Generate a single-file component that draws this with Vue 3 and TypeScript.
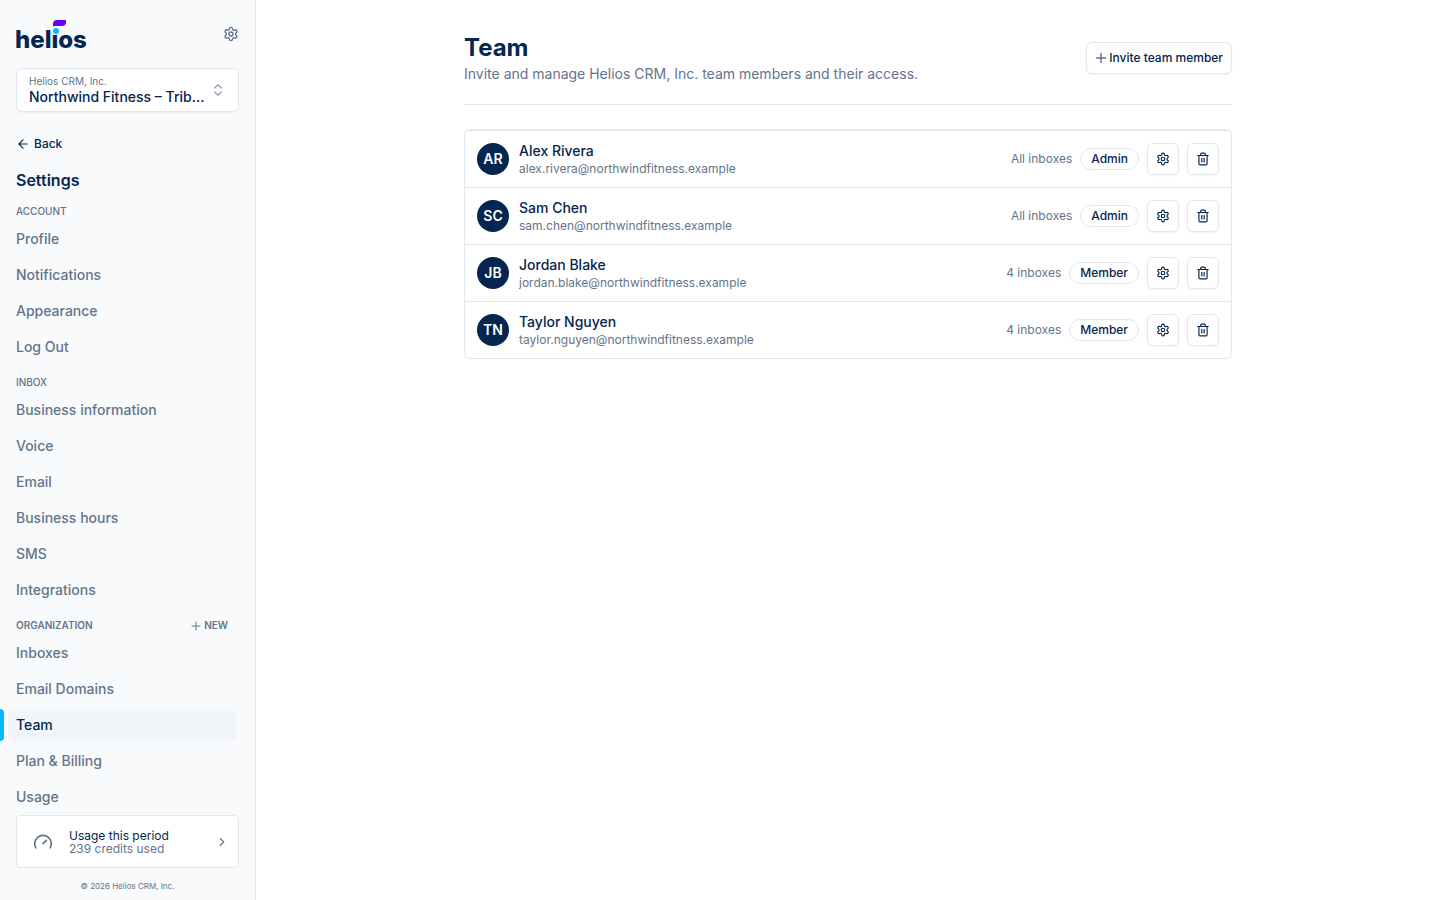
<script setup lang="ts">
interface NavItem { label: string; active?: boolean }
interface NavGroup { title: string; canAdd?: boolean; items: NavItem[] }
interface Member { initials: string; name: string; email: string; access: string; role: string }

const toItems = (labels: string[], active = ''): NavItem[] =>
  labels.map((label) => ({ label, active: label === active }))

const groups: NavGroup[] = [
  { title: 'Account', items: toItems(['Profile', 'Notifications', 'Appearance', 'Log Out']) },
  {
    title: 'Inbox',
    items: toItems(['Business information', 'Voice', 'Email', 'Business hours', 'SMS', 'Integrations']),
  },
  {
    title: 'Organization',
    canAdd: true,
    items: toItems(['Inboxes', 'Email Domains', 'Team', 'Plan & Billing', 'Usage'], 'Team'),
  },
]

const members: Member[] = [
  { initials: 'AR', name: 'Alex Rivera', email: 'alex.rivera@northwindfitness.example', access: 'All inboxes', role: 'Admin' },
  { initials: 'SC', name: 'Sam Chen', email: 'sam.chen@northwindfitness.example', access: 'All inboxes', role: 'Admin' },
  { initials: 'JB', name: 'Jordan Blake', email: 'jordan.blake@northwindfitness.example', access: '4 inboxes', role: 'Member' },
  { initials: 'TN', name: 'Taylor Nguyen', email: 'taylor.nguyen@northwindfitness.example', access: '4 inboxes', role: 'Member' },
]

const gearPath =
  'M12.22 2h-.44a2 2 0 0 0-2 2v.18a2 2 0 0 1-1 1.73l-.43.25a2 2 0 0 1-2 0l-.15-.08a2 2 0 0 0-2.73.73l-.22.38a2 2 0 0 0 .73 2.73l.15.1a2 2 0 0 1 1 1.72v.51a2 2 0 0 1-1 1.74l-.15.09a2 2 0 0 0-.73 2.73l.22.38a2 2 0 0 0 2.73.73l.15-.08a2 2 0 0 1 2 0l.43.25a2 2 0 0 1 1 1.73V20a2 2 0 0 0 2 2h.44a2 2 0 0 0 2-2v-.18a2 2 0 0 1 1-1.73l.43-.25a2 2 0 0 1 2 0l.15.08a2 2 0 0 0 2.73-.73l.22-.39a2 2 0 0 0-.73-2.73l-.15-.08a2 2 0 0 1-1-1.74v-.5a2 2 0 0 1 1-1.74l.15-.09a2 2 0 0 0 .73-2.73l-.22-.38a2 2 0 0 0-2.73-.73l-.15.08a2 2 0 0 1-2 0l-.43-.25a2 2 0 0 1-1-1.73V4a2 2 0 0 0-2-2z'
</script>

<template>
  <div class="app">
    <aside class="sidebar">
      <header class="brand">
        <a class="logo" href="#" aria-label="helios">
          <svg width="76" height="32" viewBox="0 0 76 32" aria-hidden="true">
            <text class="wordmark" x="-1" y="30">helıos</text>
            <path d="M37 9V6q0-4 4-4h8q1 0 1 1v1q0 4-4 4h-7q-2 0-2 1z" fill="#6a00f4" />
            <circle cx="40" cy="13" r="3" fill="#00bbff" />
          </svg>
        </a>
        <button class="plain" type="button" aria-label="Settings">
          <svg class="icon" width="16" height="16" viewBox="0 0 24 24"><path :d="gearPath" /><circle cx="12" cy="12" r="3" /></svg>
        </button>
      </header>

      <button class="switcher" type="button" aria-haspopup="listbox">
        <span class="switcher-text">
          <span class="org">Helios CRM, Inc.</span>
          <span class="inbox">Northwind Fitness – Trib…</span>
        </span>
        <svg class="icon light" width="16" height="16" viewBox="0 0 24 24"><path d="m7 15 5 5 5-5M7 9l5-5 5 5" /></svg>
      </button>

      <a class="back" href="#">
        <svg class="icon" width="14" height="14" viewBox="0 0 24 24"><path d="m12 19-7-7 7-7M19 12H5" /></svg>
        Back
      </a>
      <h2 class="heading">Settings</h2>

      <nav class="nav" aria-label="Settings">
        <section v-for="group in groups" :key="group.title" class="group">
          <div class="group-head" :class="{ strong: group.canAdd }">
            <h3 class="group-title">{{ group.title }}</h3>
            <button v-if="group.canAdd" class="plain new" type="button">
              <svg class="icon" width="12" height="12" viewBox="0 0 24 24"><path d="M4 12h16M12 4v16" /></svg>
              New
            </button>
          </div>
          <ul class="items">
            <li v-for="item in group.items" :key="item.label" class="item">
              <a class="link" :class="{ active: item.active }" :aria-current="item.active ? 'page' : undefined" href="#">{{ item.label }}</a>
            </li>
          </ul>
        </section>
      </nav>

      <a class="usage" href="#">
        <svg class="icon" width="20" height="20" viewBox="0 0 24 24"><path d="m12 14 4-4M3.34 19a10 10 0 1 1 17.32 0" /></svg>
        <span class="usage-text">
          <span class="usage-title">Usage this period</span>
          <span>239 credits used</span>
        </span>
        <svg class="icon chevron" width="14" height="14" viewBox="0 0 24 24"><path d="m9 18 6-6-6-6" /></svg>
      </a>
      <footer class="copyright">© 2026 Helios CRM, Inc.</footer>
    </aside>

    <main class="main">
      <div class="content">
        <header class="page-head">
          <div>
            <h1 class="title">Team</h1>
            <p class="subtitle">Invite and manage Helios CRM, Inc. team members and their access.</p>
          </div>
          <button class="btn invite" type="button">
            <svg class="icon" width="12" height="12" viewBox="0 0 24 24"><path d="M3 12h18M12 3v18" /></svg>
            Invite team member
          </button>
        </header>

        <ul class="members">
          <li v-for="m in members" :key="m.email" class="member">
            <span class="avatar" aria-hidden="true">{{ m.initials }}</span>
            <div class="who">
              <span class="name">{{ m.name }}</span>
              <span class="email">{{ m.email }}</span>
            </div>
            <span class="access">{{ m.access }}</span>
            <span class="role">{{ m.role }}</span>
            <button class="btn square" type="button" :aria-label="`Edit ${m.name}`">
              <svg class="icon" width="14" height="14" viewBox="0 0 24 24"><path :d="gearPath" /><circle cx="12" cy="12" r="3" /></svg>
            </button>
            <button class="btn square" type="button" :aria-label="`Remove ${m.name}`">
              <svg class="icon" width="14" height="14" viewBox="0 0 24 24">
                <path d="M3 6h18M19 6v14c0 1-1 2-2 2H7c-1 0-2-1-2-2V6M8 6V4c0-1 1-2 2-2h4c1 0 2 1 2 2v2M10 11v6M14 11v6" />
              </svg>
            </button>
          </li>
        </ul>
      </div>
    </main>
  </div>
</template>

<style>
body {
  margin: 0;
  background: #fff;
}
</style>

<style scoped>
.app {
  --navy: #05264e;
  --slate: #64748b;
  --line: #e2e8f0;
  display: flex;
  height: 100vh;
  font-family: Inter, "Liberation Sans", sans-serif;
  font-size: 14px;
  line-height: 20px;
  color: var(--navy);
  -webkit-font-smoothing: antialiased;
}
.app * {
  box-sizing: border-box;
}
h1, h2, h3, p, ul {
  margin: 0;
  padding: 0;
}
ul {
  list-style: none;
}
a {
  color: inherit;
  text-decoration: none;
}
button {
  font: inherit;
  color: inherit;
  cursor: pointer;
}
.icon {
  display: block;
  flex: none;
  fill: none;
  stroke: currentColor;
  stroke-width: 2;
  stroke-linecap: round;
  stroke-linejoin: round;
}
.plain {
  display: flex;
  align-items: center;
  padding: 0;
  border: 0;
  background: none;
  color: var(--slate);
}
.sidebar {
  display: flex;
  flex: none;
  flex-direction: column;
  width: 256px;
  padding: 0 16px;
  border-right: 1px solid var(--line);
  background: #f8fafc;
}
.brand {
  display: flex;
  flex: none;
  align-items: center;
  justify-content: space-between;
  height: 68px;
}
.logo svg {
  display: block;
  overflow: visible;
}
.wordmark {
  font-size: 24px;
  font-weight: 800;
  fill: var(--navy);
}
.switcher {
  display: flex;
  flex: none;
  align-items: center;
  gap: 4px;
  height: 44px;
  padding: 0 12px;
  border: 1px solid var(--line);
  border-radius: 6px;
  background: #fff;
  box-shadow: 0 1px 2px rgb(0 0 0 / 5%);
  text-align: left;
}
.switcher-text {
  display: flex;
  flex: 1;
  flex-direction: column;
  min-width: 0;
  padding-top: 2px;
}
.org {
  font-size: 10px;
  line-height: 12px;
  color: var(--slate);
}
.inbox {
  overflow: hidden;
  font-weight: 500;
  text-overflow: ellipsis;
  white-space: nowrap;
}
.light {
  color: #94a3b8;
}
.back {
  display: flex;
  align-items: center;
  align-self: flex-start;
  gap: 4px;
  margin-top: 22px;
  font-size: 12px;
  font-weight: 500;
}
.heading {
  margin: 14px 0 12px;
  font-size: 16px;
  font-weight: 600;
  line-height: 24px;
}
.nav {
  flex: 1;
  min-height: 0;
  margin: 0 -16px;
  overflow: hidden;
}
.group + .group {
  margin-top: 12px;
}
.group-head {
  display: flex;
  align-items: center;
  justify-content: space-between;
  height: 15px;
  margin: 0 27px 4px 16px;
}
.group-title,
.new {
  font-size: 10px;
  font-weight: 500;
  line-height: 15px;
  color: var(--slate);
  text-transform: uppercase;
}
.strong .group-title,
.strong .new {
  font-weight: 600;
}
.new {
  gap: 2px;
}
.items {
  display: flex;
  flex-direction: column;
  gap: 4px;
}
.item {
  position: relative;
  padding: 0 19px 0 8px;
}
.link {
  display: block;
  padding: 6px 8px;
  border-radius: 6px;
  font-weight: 500;
  color: var(--slate);
}
.link.active {
  background: #f1f5f9;
  color: var(--navy);
}
.link.active::before {
  position: absolute;
  inset: 0 auto 0 0;
  width: 4px;
  border-radius: 0 4px 4px 0;
  background: #00bbff;
  content: "";
}
.usage {
  display: flex;
  flex: none;
  align-items: center;
  gap: 16px;
  padding: 13px 9px 12px 16px;
  border: 1px solid var(--line);
  border-radius: 4px;
  background: #fff;
  font-size: 12px;
  line-height: 13px;
  color: var(--slate);
}
.usage-text {
  display: flex;
  flex: 1;
  flex-direction: column;
}
.usage-title {
  color: var(--navy);
}
.copyright {
  padding: 12px 0 8px;
  font-size: 8px;
  line-height: 12px;
  color: var(--slate);
  text-align: center;
}
.main {
  flex: 1;
  min-width: 0;
  overflow: auto;
}
.content {
  max-width: 768px;
  margin: 0 auto;
  padding: 32px 0;
}
.page-head {
  display: flex;
  align-items: center;
  justify-content: space-between;
  padding-bottom: 20px;
  border-bottom: 1px solid var(--line);
}
.title {
  font-size: 24px;
  font-weight: 700;
  line-height: 32px;
}
.subtitle {
  color: var(--slate);
}
.btn {
  display: flex;
  flex: none;
  align-items: center;
  justify-content: center;
  height: 32px;
  border: 1px solid var(--line);
  border-radius: 6px;
  background: #fff;
  box-shadow: 0 1px 2px rgb(0 0 0 / 5%);
}
.invite {
  gap: 2px;
  padding: 0 8px;
  font-size: 12px;
  font-weight: 500;
}
.invite .icon {
  color: var(--slate);
  stroke-width: 3;
}
.square {
  width: 32px;
  padding: 0;
}
.members {
  margin-top: 24px;
  border: 1px solid var(--line);
  border-radius: 6px;
}
.member {
  display: flex;
  align-items: center;
  gap: 8px;
  padding: 10px 12px;
  border-top: 1px solid var(--line);
}
.avatar {
  display: flex;
  flex: none;
  align-items: center;
  justify-content: center;
  width: 32px;
  height: 32px;
  border-radius: 50%;
  background: var(--navy);
  font-weight: 600;
  color: #fff;
}
.who {
  display: flex;
  flex: 1;
  flex-direction: column;
  min-width: 0;
  padding-left: 2px;
}
.name {
  font-weight: 500;
}
.email,
.access {
  font-size: 12px;
  line-height: 16px;
  color: var(--slate);
}
.role {
  padding: 2px 10px;
  border: 1px solid var(--line);
  border-radius: 11px;
  font-size: 12px;
  font-weight: 500;
  line-height: 16px;
}
</style>
